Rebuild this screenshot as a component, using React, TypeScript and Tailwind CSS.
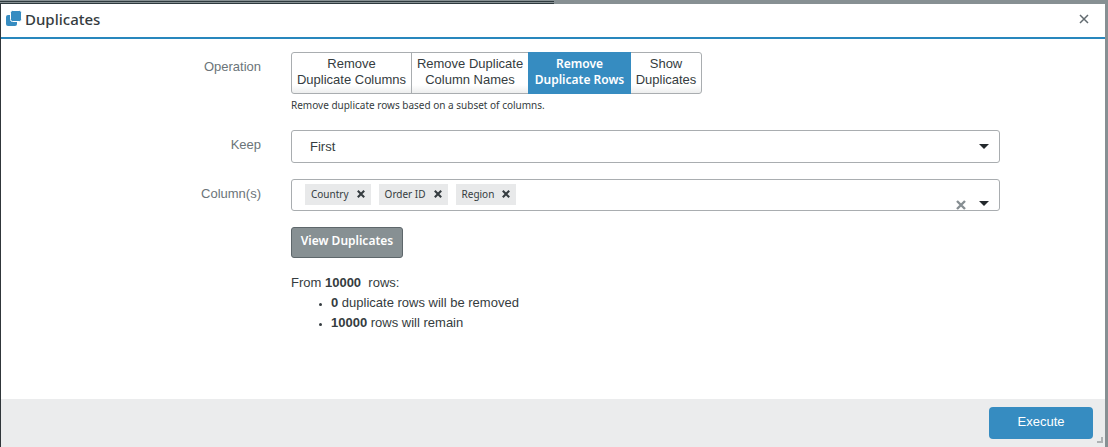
import { useState } from "react";
import type { ReactNode } from "react";

const operations = [
  { id: "columns", first: "Remove", second: "Duplicate Columns", width: "w-[121px]" },
  { id: "names", first: "Remove Duplicate", second: "Column Names", width: "w-[118px]" },
  { id: "rows", first: "Remove", second: "Duplicate Rows", width: "w-[103px]" },
  { id: "show", first: "Show", second: "Duplicates", width: "w-[72px]" },
];

function Cross({ className }: { className: string }) {
  return (
    <svg viewBox="0 0 10 10" className={className} fill="none" stroke="currentColor" aria-hidden="true">
      <path d="M1 1L9 9M9 1L1 9" />
    </svg>
  );
}

function Caret() {
  return (
    <svg viewBox="0 0 10 5" className="h-[5px] w-[10px] fill-[#24292d]" aria-hidden="true">
      <path d="M0 0H10L5 5Z" />
    </svg>
  );
}

function Row({ label, htmlFor, children }: { label?: string; htmlFor?: string; children: ReactNode }) {
  return (
    <div className="grid grid-cols-[260px_minmax(0,1fr)] gap-[30px]">
      <div className="pt-[5px] text-right text-[#6b7479]">
        {label && (
          <label id={`${htmlFor}-label`} htmlFor={htmlFor}>
            {label}
          </label>
        )}
      </div>
      <div className="min-w-0">{children}</div>
    </div>
  );
}

export default function App() {
  const [operation, setOperation] = useState("rows");
  const [columns, setColumns] = useState(["Country", "Order ID", "Region"]);

  return (
    <div className="flex min-h-screen flex-col border-b border-[#4b555a] bg-[#879093] pt-px font-['Liberation_Sans',sans-serif] text-[13px] leading-5 text-[#353c40]">
      <div className="flex h-[3px] shrink-0">
        <div className="w-1/2 border-t border-b border-[#2e3a3e]" />
      </div>
      <section className="mr-[3px] flex flex-1 flex-col border-l border-[#30363a] bg-white" aria-labelledby="title">
        <header className="flex h-[35px] items-center justify-between border-b-2 border-[#2887bd] pr-4 pb-[3px] pl-[5px]">
          <div className="flex items-center gap-[3px]">
            <svg viewBox="0 0 16 16" className="h-4 w-4 overflow-visible fill-[#368cc1]" aria-hidden="true">
              <rect x="0" y="4" width="11" height="11" rx="2" />
              <rect x="4.5" y="-0.5" width="11" height="11" rx="2" stroke="white" />
            </svg>
            <h1 id="title" className="pb-px font-['Noto_Sans',sans-serif] text-[15px] font-medium">
              Duplicates
            </h1>
          </div>
          <button type="button" aria-label="Close" className="text-[#626b70]">
            <Cross className="h-[10px] w-[10px] stroke-[1.5]" />
          </button>
        </header>

        <main className="flex flex-1 flex-col gap-4 pt-[13px] pr-[105px] pb-[66px]">
          <Row label="Operation" htmlFor="operation">
            <div id="operation" role="group" aria-labelledby="operation-label" className="flex">
              {operations.map((item) => (
                <button
                  key={item.id}
                  type="button"
                  aria-pressed={operation === item.id}
                  onClick={() => setOperation(item.id)}
                  className={`-mr-px h-[42px] shrink-0 border pb-[2px] text-center leading-4 whitespace-nowrap first:rounded-l-[3px] last:rounded-r-[3px] ${item.width} ${
                    operation === item.id
                      ? "z-10 border-[#368cc1] bg-[#368cc1] font-['Noto_Sans',sans-serif] text-[12px] font-semibold text-white"
                      : "border-[#a9adb0] bg-linear-to-b from-white from-80% to-[#edeeee]"
                  }`}
                >
                  {item.first}
                  <br />
                  {item.second}
                </button>
              ))}
            </div>
            <p className="pt-[3px] pb-px font-['Noto_Sans',sans-serif] text-[10px] leading-4">
              Remove duplicate rows based on a subset of columns.
            </p>
          </Row>

          <Row label="Keep" htmlFor="keep">
            <div className="relative">
              <select
                id="keep"
                className="h-[33px] w-full appearance-none rounded-[3px] border border-[#a9adb0] bg-white pr-8 pl-[18px]"
              >
                <option>First</option>
                <option>Last</option>
              </select>
              <span className="pointer-events-none absolute top-[14px] right-[11px]">
                <Caret />
              </span>
            </div>
          </Row>

          <Row label="Column(s)" htmlFor="columns">
            <div
              id="columns"
              role="group"
              aria-labelledby="columns-label"
              className="flex h-8 justify-between rounded-[3px] border border-[#a9adb0] bg-white pr-[10px] pl-[13px]"
            >
              <ul className="flex items-start gap-2 pt-1">
                {columns.map((column) => (
                  <li
                    key={column}
                    className="flex h-[21px] items-center gap-2 bg-[#e8e9ea] px-[6px] pb-px font-['Noto_Sans',sans-serif] text-[10px]"
                  >
                    {column}
                    <button
                      type="button"
                      aria-label={`Remove ${column}`}
                      onClick={() => setColumns(columns.filter((name) => name !== column))}
                    >
                      <Cross className="h-2 w-2 stroke-[2.6]" />
                    </button>
                  </li>
                ))}
              </ul>
              <div className="flex items-end gap-[13px]">
                <button type="button" aria-label="Clear columns" className="text-[#868e92]" onClick={() => setColumns([])}>
                  <Cross className="h-[10px] w-[10px] stroke-[2.4]" />
                </button>
                <button type="button" aria-label="Open columns" className="pb-1">
                  <Caret />
                </button>
              </div>
            </div>
          </Row>

          <Row>
            <button
              type="button"
              className="h-[31px] w-28 rounded-[3px] border border-[#5e676b] bg-[#879093] pb-1 font-['Noto_Sans',sans-serif] text-[12px] font-semibold text-white"
            >
              View Duplicates
            </button>
            <div className="pt-[15px]">
              <p>
                From <b>10000</b>&nbsp; rows:
              </p>
              <ul className="list-disc pl-10 marker:text-[9px]">
                <li>
                  <b>0</b> duplicate rows will be removed
                </li>
                <li>
                  <b>10000</b> rows will remain
                </li>
              </ul>
            </div>
          </Row>
        </main>

        <footer className="relative flex justify-end bg-[#ebeced] py-2 pr-3">
          <button type="button" className="h-8 w-[104px] rounded-[4px] bg-[#368cc1] pb-[2px] text-white">
            Execute
          </button>
          <span className="absolute right-[2px] bottom-1 h-[6px] w-[6px] border-r-2 border-b-2 border-[#aeb2b4]" />
        </footer>
      </section>
    </div>
  );
}
